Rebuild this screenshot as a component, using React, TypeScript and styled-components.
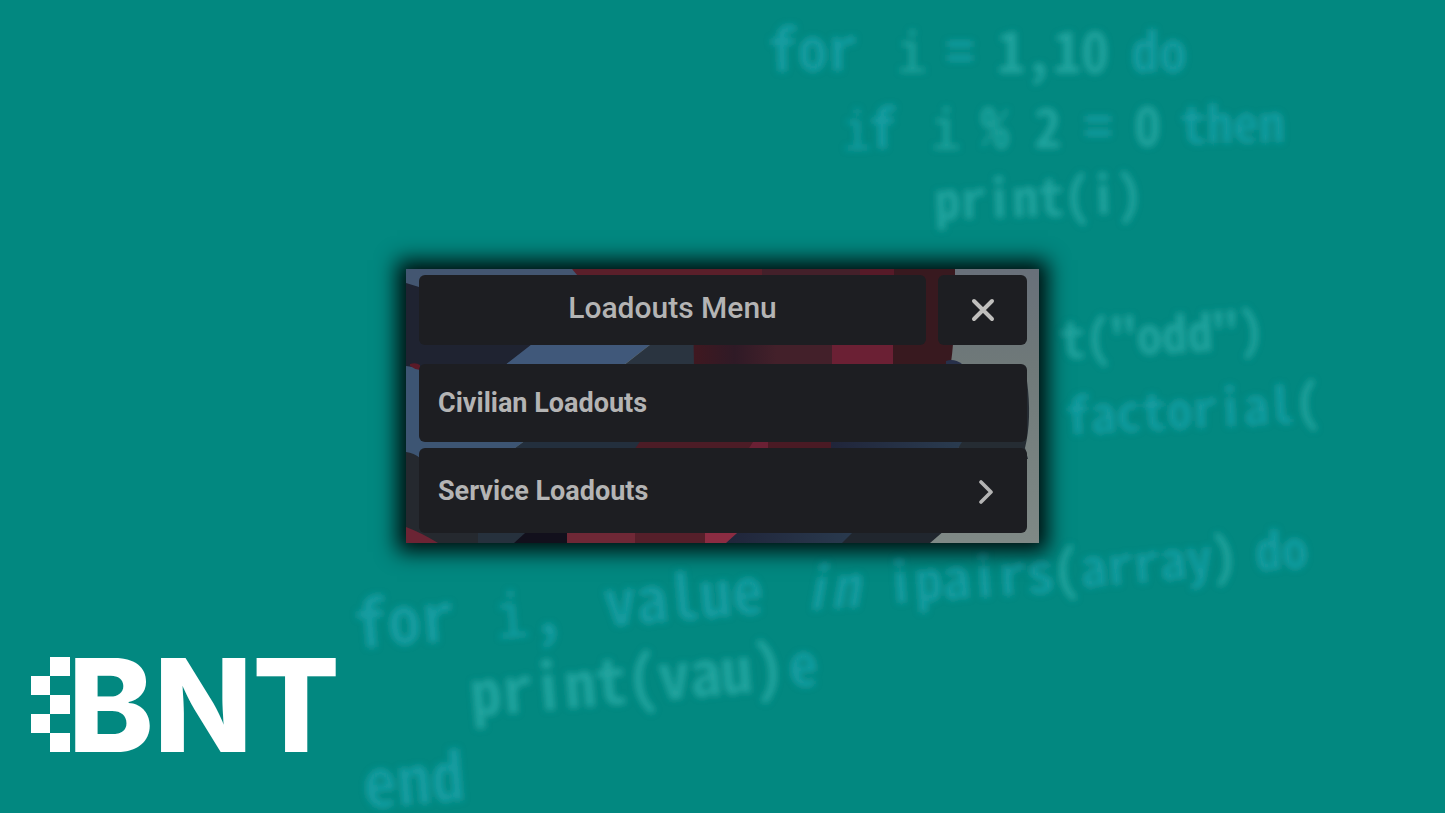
import React from "react";
import styled, { createGlobalStyle } from "styled-components";

const GlobalStyle = createGlobalStyle`
  *, *::before, *::after { box-sizing: border-box; }
  body {
    margin: 0;
    background: #028880;
    font-family: Roboto, "Liberation Sans", sans-serif;
  }
`;

const Page = styled.main`
  position: relative;
  isolation: isolate;
  overflow: hidden;
  min-height: 100vh;
  padding-bottom: 1px;
  display: grid;
  grid-template-rows: 1fr auto 1fr;
  justify-items: center;
`;

const Backdrop = styled.svg`
  position: absolute;
  inset: 0;
  width: 100%;
  height: 100%;
  z-index: -1;
  font-family: "Noto Sans Mono CJK SC", "DejaVu Sans Mono", monospace;
  font-weight: 700;
`;

const SlabText = styled.text`
  font-family: "DejaVu Sans Mono", monospace;
  font-weight: 400;
`;

const Panel = styled.section`
  position: relative;
  grid-row: 2;
  width: 100%;
  max-width: 633px;
  padding: 6px 12px 10px 13px;
  display: flex;
  flex-direction: column;
  box-shadow: 0 0 20px 9px rgba(0, 0, 0, 0.9);
`;

const PanelArt = styled.svg`
  position: absolute;
  inset: 0;
  width: 100%;
  height: 100%;
  z-index: -1;
`;

const Header = styled.header`
  display: flex;
  gap: 12px;
  height: 70px;
  margin-bottom: 19px;
`;

const Title = styled.h1`
  flex: 1;
  margin: 0;
  display: flex;
  align-items: center;
  justify-content: center;
  padding-bottom: 4px;
  border-radius: 6px;
  background: #1d1e22;
  color: #b4b4b4;
  font-size: 30px;
  font-weight: 500;
  line-height: 36px;
`;

const CloseButton = styled.button`
  width: 89px;
  padding: 0;
  display: grid;
  place-items: center;
  border: 0;
  border-radius: 6px;
  background: #1d1e22;
  color: #c0bfbd;
  cursor: pointer;
`;

const Items = styled.nav`
  display: flex;
  flex-direction: column;
  gap: 6px;
`;

const Item = styled.button<{ $tall?: boolean }>`
  height: ${(p) => (p.$tall ? 85 : 78)}px;
  padding: 0 32px 0 19px;
  display: flex;
  align-items: center;
  justify-content: space-between;
  border: 0;
  border-radius: 6px;
  background: #1d1e22;
  color: #b4b4b4;
  font-family: inherit;
  font-size: 27px;
  font-weight: 700;
  line-height: 32px;
  text-align: left;
  cursor: pointer;
`;

const Logo = styled.svg`
  grid-row: 3;
  justify-self: start;
  align-self: end;
  overflow: visible;
  margin: 0 0 59px 30px;
  font-family: Inter, "Liberation Sans", sans-serif;
`;

const BLUE = "#129da1";
const PALE = "#20a49f";

type Word = { t: string; x: number; y: number; s: number; r?: number; c?: string; i?: boolean; slab?: boolean };

const words: Word[] = [
  { t: "for", x: 768, y: 72, s: 60, r: -1 },
  { t: "i", x: 895, y: 72, s: 56, c: PALE, slab: true },
  { t: "=", x: 946, y: 72, s: 56 },
  { t: "1,10", x: 997, y: 73, s: 56, c: PALE },
  { t: "do", x: 1131, y: 72, s: 56 },
  { t: "i", x: 841, y: 150, s: 54, r: -1, slab: true },
  { t: "f", x: 869, y: 149, s: 56, r: -1 },
  { t: "i", x: 929, y: 149, s: 56, c: PALE, slab: true },
  { t: "%", x: 981, y: 148, s: 56, c: PALE },
  { t: "2", x: 1034, y: 148, s: 54, c: PALE },
  { t: "=", x: 1084, y: 147, s: 56 },
  { t: "0", x: 1134, y: 146, s: 54, c: PALE },
  { t: "then", x: 1181, y: 144, s: 52, r: -1 },
  { t: "print(i)", x: 935, y: 220, s: 52, r: -2, c: PALE },
  { t: 't("odd")', x: 1061, y: 359, s: 51, r: -3, c: PALE },
  { t: "factorial", x: 1066, y: 435, s: 51, r: -3 },
  { t: "(", x: 1296, y: 422, s: 51, r: -3, c: PALE },
  { t: "for", x: 356, y: 649, s: 67, r: -5 },
  { t: "i", x: 495, y: 639, s: 62, r: -5, slab: true },
  { t: ",", x: 533, y: 636, s: 64, r: -5 },
  { t: "value", x: 606, y: 627, s: 64, r: -5 },
  { t: "in", x: 802, y: 611, s: 58, r: -4, i: true },
  { t: "ipairs", x: 888, y: 604, s: 56, r: -4 },
  { t: "(", x: 1054, y: 591, s: 55, r: -4, c: PALE },
  { t: "array", x: 1082, y: 588, s: 53, r: -5 },
  { t: ")", x: 1212, y: 577, s: 53, r: -4, c: PALE },
  { t: "do", x: 1256, y: 571, s: 53, r: -3 },
  { t: "print(vau)", x: 472, y: 717, s: 63, r: -5, c: PALE },
  { t: "e", x: 790, y: 688, s: 60, r: -5 },
  { t: "end", x: 365, y: 809, s: 68, r: -5 },
];

function CodeBackdrop() {
  return (
    <Backdrop viewBox="0 0 1445 813" preserveAspectRatio="xMidYMid slice" aria-hidden="true">
      <defs>
        <filter id="soft" x="-5%" y="-5%" width="110%" height="110%">
          <feGaussianBlur stdDeviation="3" />
        </filter>
      </defs>
      <g filter="url(#soft)">
        {words.map((w, n) => {
          const Text = w.slab ? SlabText : "text";
          return (
            <Text
              key={n}
              transform={`translate(${w.x} ${w.y}) rotate(${w.r ?? 0})`}
              fontSize={w.s}
              fill={w.c ?? BLUE}
              fontStyle={w.i ? "italic" : "normal"}
            >
              {w.t}
            </Text>
          );
        })}
      </g>
    </Backdrop>
  );
}

function Art() {
  return (
    <PanelArt viewBox="0 0 633 274" preserveAspectRatio="none" aria-hidden="true">
      <defs>
        <linearGradient id="wall" x1="0" y1="0" x2="0" y2="1">
          <stop offset="0" stopColor="#68707a" />
          <stop offset="0.35" stopColor="#6f7979" />
          <stop offset="1" stopColor="#7f8986" />
        </linearGradient>
        <linearGradient id="shade" x1="0" y1="0" x2="1" y2="0">
          <stop offset="0" stopColor="#401820" />
          <stop offset="0.3" stopColor="#2f1a26" />
          <stop offset="0.6" stopColor="#43202a" />
          <stop offset="1" stopColor="#43202a" />
        </linearGradient>
        <linearGradient id="dusk" x1="0" y1="0" x2="1" y2="0">
          <stop offset="0" stopColor="#20253a" />
          <stop offset="1" stopColor="#2a3c50" />
        </linearGradient>
      </defs>
      <rect width="633" height="274" fill="url(#wall)" />
      {/* top band */}
      <path d="M0 0H166L182 9V40H0Z" fill="#435671" />
      <path d="M166 0H356V40H200Z" fill="#5a1f2a" />
      <path d="M356 0H454V40H356Z" fill="#43202a" />
      <path d="M454 0H488V40H454Z" fill="#561a28" />
      <path d="M488 0H549V40H488Z" fill="#38191f" />
      {/* between the header and the list */}
      <path d="M0 14L13 18L60 40H180L101 95V105H0Z" fill="#1f2331" />
      <path d="M171 40H290L219 95V100H94Z" fill="#40587a" />
      <path d="M290 40V100H213Z" fill="#2a3440" />
      <path d="M287 40H426V100H288Z" fill="url(#shade)" />
      <path d="M426 40H487V100H426Z" fill="#6b2034" />
      <path d="M487 20H549Q549 70 544 100H487Z" fill="#38191f" />
      <path d="M540 100V92Q548 89 556 95V100Z" fill="#27304a" />
      {/* between the list items */}
      <path d="M0 97L20 100L190 120L109 179V190H0Z" fill="#3d5573" />
      <path d="M190 120H270L231 179V190H94Z" fill="#232f3d" />
      <path d="M270 120H380V190H222Z" fill="#4c1c26" />
      <path d="M347 173H362V190H336Z" fill="#6b2034" />
      <path d="M362 150H425V190H362Z" fill="#4a1a24" />
      <path d="M425 150H560V173L552 179V190H425Z" fill="url(#dusk)" />
      <path d="M556 173L580 110L621 112Q626 150 619 179L622 190H545Z" fill="#252c33" />
      <path d="M4 95Q10 93 14 96V101Q8 100 4 97Z" fill="#5a1a28" />
      {/* bottom band */}
      <path d="M0 183Q8 184 14 189L130 230L108 274H0Z" fill="#25292f" />
      <path d="M72 250H140V274H72Z" fill="#26313d" />
      <path d="M0 258Q16 264 32 274H0Z" fill="#6b2434" />
      <path d="M129 255H161V274H108Z" fill="#12101c" />
      <path d="M161 255H229V274H161Z" fill="#6f2836" />
      <path d="M229 255H299V274H229Z" fill="#551f2a" />
      <path d="M299 255H341V274H299Z" fill="#8b2c42" />
      <path d="M341 255H460V274H320Z" fill="url(#dusk)" />
      <path d="M455 255H546L524 274H436Z" fill="#20262e" />
    </PanelArt>
  );
}

export default function App() {
  return (
    <Page>
      <GlobalStyle />
      <CodeBackdrop />
      <Panel aria-labelledby="menu-title">
        <Art />
        <Header>
          <Title id="menu-title">Loadouts Menu</Title>
          <CloseButton type="button" aria-label="Close">
            <svg width="24" height="24" viewBox="0 0 24 24" fill="none" stroke="currentColor" strokeWidth="4" strokeLinecap="round">
              <path d="M3 3L21 21M21 3L3 21" />
            </svg>
          </CloseButton>
        </Header>
        <Items aria-label="Loadouts">
          <Item type="button">Civilian Loadouts</Item>
          <Item type="button" $tall>
            Service Loadouts
            <svg width="18" height="26" viewBox="0 0 18 26" fill="none" stroke="currentColor" strokeWidth="3.6" strokeLinecap="round" strokeLinejoin="round">
              <path d="M4 4L14 14L4 24" />
            </svg>
          </Item>
        </Items>
      </Panel>
      <Logo width="320" height="96" viewBox="0 0 320 96" fill="#fff" role="img" aria-label="BNT">
        <path d="M20 0h20v19H20zM1 19h19v19H1zM20 38h20v19H20zM1 57h19v19H1zM20 76h20v19H20z" />
        <text x="38" y="95" fontSize="129" fontWeight="800">BNT</text>
      </Logo>
    </Page>
  );
}
